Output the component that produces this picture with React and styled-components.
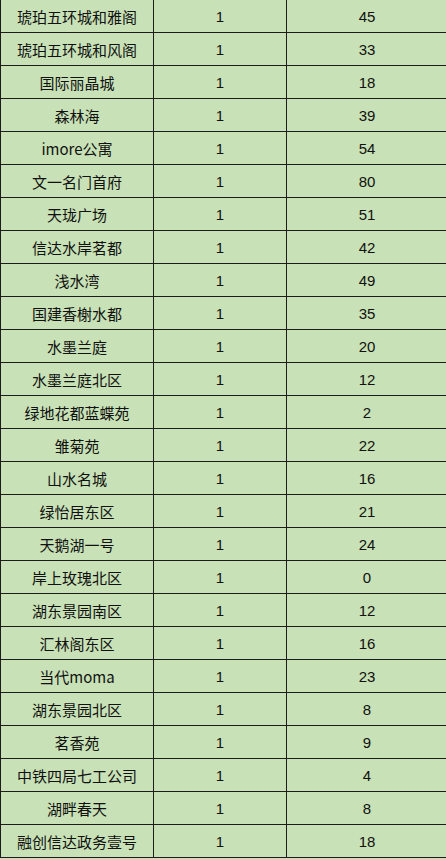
import React from 'react';
import styled, { createGlobalStyle } from 'styled-components';

const GlobalStyle = createGlobalStyle`
  * {
    margin: 0;
    padding: 0;
    box-sizing: border-box;
  }

  body {
    background: #c8e1b6;
    font-family: "Noto Sans CJK SC", "Liberation Sans", sans-serif;
    overflow: hidden;
  }
`;

const Sheet = styled.div`
  width: 448px;
  display: flex;
  flex-direction: column;
  background: #c8e1b6;
`;

const Row = styled.div`
  display: grid;
  grid-template-columns: 153px 133px 161px;
  height: 33px;
  border-left: 1px solid #1c1c1c;
`;

const Cell = styled.div`
  display: flex;
  align-items: center;
  justify-content: center;
  border-right: 1px solid #1c1c1c;
  border-bottom: 1px solid #1c1c1c;
  color: #111;
  font-size: 15px;
  font-family: ${props => props.num
    ? '"Liberation Sans", Arial, sans-serif'
    : '"Noto Sans CJK SC", "Liberation Sans", sans-serif'};
  line-height: 1;
  padding-top: ${props => props.num ? '1px' : '0'};
  white-space: nowrap;
`;

const rows = [
  ['琥珀五环城和雅阁', 1, 45],
  ['琥珀五环城和风阁', 1, 33],
  ['国际丽晶城', 1, 18],
  ['森林海', 1, 39],
  ['imore公寓', 1, 54],
  ['文一名门首府', 1, 80],
  ['天珑广场', 1, 51],
  ['信达水岸茗都', 1, 42],
  ['浅水湾', 1, 49],
  ['国建香榭水都', 1, 35],
  ['水墨兰庭', 1, 20],
  ['水墨兰庭北区', 1, 12],
  ['绿地花都蓝蝶苑', 1, 2],
  ['雏菊苑', 1, 22],
  ['山水名城', 1, 16],
  ['绿怡居东区', 1, 21],
  ['天鹅湖一号', 1, 24],
  ['岸上玫瑰北区', 1, 0],
  ['湖东景园南区', 1, 12],
  ['汇林阁东区', 1, 16],
  ['当代moma', 1, 23],
  ['湖东景园北区', 1, 8],
  ['茗香苑', 1, 9],
  ['中铁四局七工公司', 1, 4],
  ['湖畔春天', 1, 8],
  ['融创信达政务壹号', 1, 18],
];

function App() {
  return (
    <>
      <GlobalStyle />
      <Sheet>
        {rows.map(([name, count, total], i) => (
          <Row key={i}>
            <Cell>{name}</Cell>
            <Cell num>{count}</Cell>
            <Cell num>{total}</Cell>
          </Row>
        ))}
      </Sheet>
    </>
  );
}

export default App;
